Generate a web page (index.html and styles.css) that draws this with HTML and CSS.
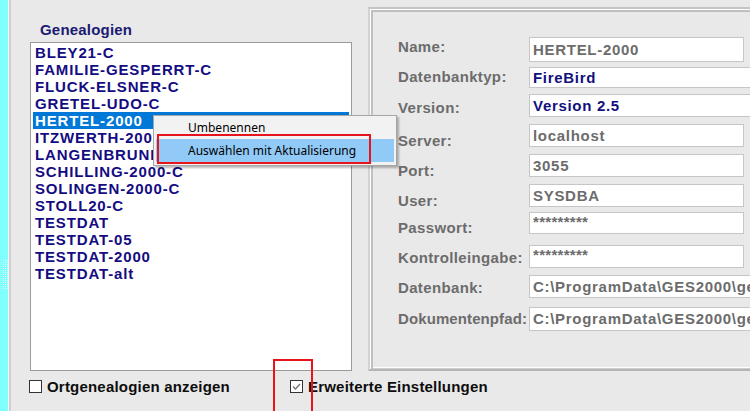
FILE: index.html
```html
<!DOCTYPE html>
<html lang="de">
<head>
<meta charset="utf-8">
<title>Genealogien</title>
<link rel="stylesheet" href="styles.css">
</head>
<body>
<div class="app">
  <div class="strip"><div class="dots"></div></div>
  <div class="divider"></div>
  <div class="main">
    <div class="top">
      <section class="gen">
        <h2 class="gen-title">Genealogien</h2>
        <ul class="list">
          <li>BLEY21-C</li>
          <li>FAMILIE-GESPERRT-C</li>
          <li>FLUCK-ELSNER-C</li>
          <li>GRETEL-UDO-C</li>
          <li class="selected">HERTEL-2000</li>
          <li>ITZWERTH-2000</li>
          <li>LANGENBRUNN-C</li>
          <li>SCHILLING-2000-C</li>
          <li>SOLINGEN-2000-C</li>
          <li>STOLL20-C</li>
          <li>TESTDAT</li>
          <li>TESTDAT-05</li>
          <li>TESTDAT-2000</li>
          <li>TESTDAT-alt</li>
        </ul>
      </section>
      <section class="group">
        <div class="group-inner">
          <div class="form">
            <span class="lbl lbl-high">Name:</span>
            <span class="field short in-tall">HERTEL-2000</span>

            <span class="lbl lbl-high">Datenbanktyp:</span>
            <span class="field long in-thin navy">FireBird</span>

            <span class="lbl">Version:</span>
            <span class="field long in-up navy">Version 2.5</span>

            <span class="lbl lbl-low">Server:</span>
            <span class="field short in-up">localhost</span>

            <span class="lbl lbl-low">Port:</span>
            <span class="field short in-up">3055</span>

            <span class="lbl lbl-low">User:</span>
            <span class="field short in-up">SYSDBA</span>

            <span class="lbl">Passwort:</span>
            <span class="field short in-pw stars">*********</span>

            <span class="lbl">Kontrolleingabe:</span>
            <span class="field short stars">*********</span>

            <span class="lbl">Datenbank:</span>
            <span class="field long">C:\ProgramData\GES2000\ge</span>

            <span class="lbl lbl-dok">Dokumentenpfad:</span>
            <span class="field long in-dok">C:\ProgramData\GES2000\ge</span>
          </div>
        </div>
      </section>
    </div>
    <div class="bottom">
      <label class="check check-first"><span class="box"></span>Ortgenealogien anzeigen</label>
      <label class="check"><span class="box"><svg width="11" height="11" viewBox="0 0 11 11"><polyline points="2,5.5 4.5,8 9,3" fill="none" stroke="#707070" stroke-width="1.3"/></svg></span>Erweiterte Einstellungen</label>
    </div>
  </div>

  <div class="menu">
    <div class="menu-item">Umbenennen</div>
    <div class="menu-item active">Auswählen mit Aktualisierung</div>
  </div>
  <div class="mark mark-menu"></div>
  <div class="mark mark-check"></div>
</div>
</body>
</html>
```

FILE: styles.css
```css
html, body {
  margin: 0;
  padding: 0;
}

body {
  width: 750px;
  height: 411px;
  overflow: hidden;
  background: #e9e9e9;
  font-family: "Liberation Sans", Arial, sans-serif;
}

.app {
  position: relative;
  display: flex;
  width: 750px;
  height: 411px;
  overflow: hidden;
  background: #e9e9e9;
}

.strip {
  width: 8px;
  flex: none;
  background: #80ffff;
  padding-top: 260px;
  box-sizing: border-box;
}

.dots {
  margin-left: 2px;
  width: 6px;
  height: 30px;
  background-image: conic-gradient(#dff6f6 25%, transparent 0);
  background-size: 2px 2px;
}

.divider {
  width: 3px;
  flex: none;
  border-left: 1px solid #f6f6f6;
  background: #cfcfcf;
  box-sizing: border-box;
}

.main {
  flex: 1;
  min-width: 0;
  display: flex;
  flex-direction: column;
}

.top {
  display: flex;
  height: 371px;
  flex: none;
}

/* ---------- Genealogien list ---------- */
.gen {
  width: 357px;
  flex: none;
  padding-left: 19px;
  box-sizing: border-box;
}

.gen-title {
  margin: 0 0 4px 0;
  padding: 21px 0 0 10px;
  font-size: 15px;
  line-height: 17px;
  font-weight: bold;
  letter-spacing: 0.2px;
  color: #1b1a72;
}

.list {
  list-style: none;
  margin: 0;
  width: 322px;
  height: 329px;
  box-sizing: border-box;
  padding: 1px 1px;
  border: 1px solid #9a9a9a;
  background: #fff;
}

.list li {
  padding-left: 2px;
  margin-left: 1px;
  margin-right: 1px;
  height: 17px;
  font-size: 15px;
  line-height: 17px;
  font-weight: bold;
  letter-spacing: 0.85px;
  color: #140c82;
  white-space: nowrap;
  overflow: hidden;
}

.list li.selected {
  background: #0078d7;
  color: #fff;
}

/* ---------- Group panel ---------- */
.group {
  flex: 1;
  margin-top: 7px;
  border-top: 2px solid #c4c4c4;
  border-left: 2px solid #d2d2d2;
  border-bottom: 2px solid #b4b4b4;
  display: flex;
}

.group-inner {
  flex: 1;
  box-shadow: inset 1px 1px 0 #fff, inset 3px 3px 0 #c0c0c0, inset 0 -1px 0 #cfcfcf, inset 0 -2px 0 #fff;
  padding: 23px 0 0 28px;
}

.form {
  display: grid;
  grid-template-columns: 131px auto;
  grid-auto-rows: 30px;
  align-items: start;
}

.lbl {
  margin-top: 7px;
  font-size: 15px;
  line-height: 17px;
  font-weight: bold;
  letter-spacing: 0.35px;
  color: #6c6c6c;
  white-space: nowrap;
}

.lbl-high { margin-top: 6px; }
.lbl-low { margin-top: 10px; }
.lbl-dok { margin-top: 8px; letter-spacing: 0.1px; }

.field {
  display: block;
  box-sizing: border-box;
  height: 23px;
  margin-top: 3px;
  padding-left: 3px;
  border: 1px solid #c6c6c6;
  background: #fff;
  font-size: 15px;
  line-height: 21px;
  font-weight: bold;
  letter-spacing: 0.7px;
  color: #6c6c6c;
  white-space: nowrap;
  overflow: hidden;
}

.short { width: 215px; }
.long { width: 260px; }

.in-tall { margin-top: 5px; height: 25px; line-height: 23px; }
.in-thin { margin-top: 5px; height: 21px; line-height: 19px; }
.in-up { margin-top: 2px; }
.in-pw { margin-top: 0; height: 22px; line-height: 18px; }
.in-dok { margin-top: 5px; height: 24px; line-height: 22px; }

.stars { line-height: 17px; letter-spacing: 0.3px; }

.navy { color: #12107c; }

/* ---------- Bottom checkboxes ---------- */
.bottom {
  display: flex;
  align-items: center;
  padding: 7px 0 0 18px;
  height: 17px;
}

.check {
  display: flex;
  align-items: center;
  font-size: 15px;
  line-height: 17px;
  font-weight: bold;
  letter-spacing: 0.2px;
  color: #0d0d0d;
  white-space: nowrap;
}

.check-first { width: 261px; }

.box {
  width: 13px;
  height: 13px;
  box-sizing: border-box;
  border: 1px solid #333;
  background: #fff;
  margin-right: 5px;
  display: flex;
  align-items: center;
  justify-content: center;
}

.box svg { display: block; }

/* ---------- Context menu (overlay) ---------- */
.menu {
  position: absolute;
  left: 153px;
  top: 115px;
  width: 244px;
  height: 51px;
  box-sizing: border-box;
  padding: 1px 2px;
  background: #f2f2f2;
  border: 1px solid #a6a6a6;
  box-shadow: 2px 2px 2px rgba(0, 0, 0, 0.28);
  font-family: "Noto Sans", "Open Sans", sans-serif;
  font-size: 12px;
  color: #000;
}

.menu-item {
  height: 22px;
  line-height: 22px;
  padding-left: 32px;
  white-space: nowrap;
}

.menu-item.active {
  height: 23px;
  line-height: 23px;
  background: #91c9f7;
}

/* ---------- Red annotation boxes (overlay) ---------- */
.mark {
  position: absolute;
  border: 2px solid #e8141b;
  box-sizing: border-box;
}

.mark-menu {
  left: 157px;
  top: 134px;
  width: 214px;
  height: 30px;
}

.mark-check {
  left: 273px;
  top: 359px;
  width: 40px;
  height: 60px;
}
```
